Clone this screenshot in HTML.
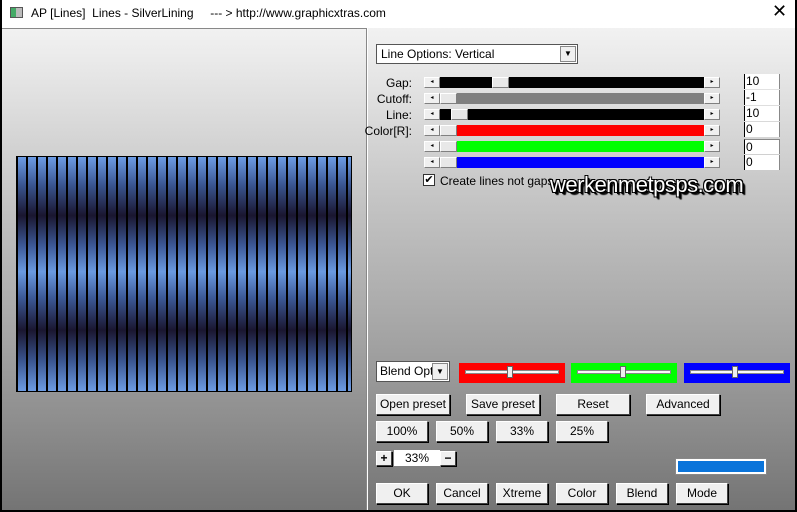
<!DOCTYPE html>
<html><head><style>
*{margin:0;padding:0;box-sizing:border-box}
html,body{width:797px;height:512px;overflow:hidden}
body{background:#000;font-family:"Liberation Sans",sans-serif;font-size:12px;position:relative}
.win{position:absolute;left:2px;top:0;width:793px;height:510px;background:linear-gradient(180deg,#f8f8f8 0px,#eaeaea 60px,#c4c4c4 200px,#a8a8a8 320px,#8e8e8e 420px,#747474 510px)}
.title{position:absolute;left:0;top:0;width:793px;height:28px;background:#fff;font-size:12px;color:#000}
.a{position:absolute}
.btn{position:absolute;height:21px;background:#f0f0f0;border:1px solid #fff;border-right-color:#404040;border-bottom-color:#404040;box-shadow:1px 1px 0 #000;text-align:center;line-height:19px;font-size:12px;color:#000}
.sb{position:absolute;left:422px;width:296px;height:11px}
.arr{position:absolute;top:0;width:16px;height:11px;background:#f0f0f0;border:1px solid #fff;border-right-color:#808080;border-bottom-color:#808080;font-size:6px;line-height:9px;text-align:center}
.thumb{position:absolute;top:0;width:17px;height:11px;background:#e8e8e8;border:1px solid #fff;border-right-color:#808080;border-bottom-color:#808080}
.lbl{position:absolute;right:383px;font-size:12px;text-align:right}
.num{position:absolute;left:742px;width:36px;height:15px;background:#fff;border-left:1px solid #000;border-right:1px solid #888;font-size:12px;line-height:14px;padding-left:1px}
</style></head><body>
<div class="win">
<div class="title">
<div class="a" style="left:8px;top:7px;width:13px;height:11px;border:1px solid #555;background:linear-gradient(90deg,#4a6 0 5px,#bbb 5px)"></div>
<div class="a" style="left:29px;top:6px;white-space:pre">AP [Lines]  Lines - SilverLining     --- &gt; http://www.graphicxtras.com</div>
<div class="a" style="left:770px;top:1px;font-size:18px">✕</div>
</div>
<div class="a" style="left:0;top:28px;width:365px;height:482px;border-top:1px solid #888;border-right:1px solid #888;box-shadow:1px 0 0 #fff"></div>
<div class="a" style="left:14px;top:156px;width:336px;height:236px;border:1px solid #000;background:repeating-linear-gradient(90deg,#000 0 1px,transparent 1px 9px,#000 9px 10px),linear-gradient(#6d9ce4 0%,#3a5590 12%,#1a1630 25%,#3d5a98 38%,#6a9ae0 49%,#3d5a98 60%,#1a1630 74%,#3a5590 87%,#6d9ce4 100%)"></div>

<div class="a" style="left:374px;top:44px;width:202px;height:20px;background:#fff;border:1px solid #555;font-size:12px;line-height:18px;padding-left:4px">Line Options: Vertical<div class="a" style="right:1px;top:1px;width:16px;height:16px;background:#f0f0f0;border:1px solid #888;font-size:8px;line-height:14px;text-align:center">▼</div></div>

<div class="lbl" style="top:76px">Gap:</div>
<div class="lbl" style="top:92px">Cutoff:</div>
<div class="lbl" style="top:108px">Line:</div>
<div class="lbl" style="top:124px">Color[R]:</div>

<div class="sb" style="top:77px;background:#000"><div class="arr" style="left:0">◂</div><div class="thumb" style="left:68px"></div><div class="arr" style="right:0">▸</div></div>
<div class="sb" style="top:93px;background:#808080"><div class="arr" style="left:0">◂</div><div class="thumb" style="left:16px"></div><div class="arr" style="right:0">▸</div></div>
<div class="sb" style="top:109px;background:#000"><div class="arr" style="left:0">◂</div><div class="thumb" style="left:27px"></div><div class="arr" style="right:0">▸</div></div>
<div class="sb" style="top:125px;background:#f00"><div class="arr" style="left:0">◂</div><div class="thumb" style="left:16px"></div><div class="arr" style="right:0">▸</div></div>
<div class="sb" style="top:141px;background:#0f0"><div class="arr" style="left:0">◂</div><div class="thumb" style="left:16px"></div><div class="arr" style="right:0">▸</div></div>
<div class="sb" style="top:157px;background:#00f"><div class="arr" style="left:0">◂</div><div class="thumb" style="left:16px"></div><div class="arr" style="right:0">▸</div></div>

<div class="num" style="top:74px">10</div>
<div class="num" style="top:90px">-1</div>
<div class="num" style="top:106px">10</div>
<div class="num" style="top:122px">0</div>
<div class="num" style="top:139px;border-top:1px solid #888">0</div>
<div class="num" style="top:155px">0</div>

<div class="a" style="left:421px;top:174px;width:12px;height:12px;background:#fff;border:1px solid #333;font-size:11px;line-height:10px;text-align:center">✔</div>
<div class="a" style="left:438px;top:174px;font-size:12px">Create lines not gaps</div>
<div class="a" style="left:548px;top:172px;font-size:22px;color:#fff;letter-spacing:-.5px;text-shadow:-1px -1px 0 #000,1px 1px 0 #000,2px 2px 0 #000,3px 3px 1px #000,-1px 1px 0 #000,1px -1px 0 #000">werkenmetpsps.com</div>

<div class="a" style="left:374px;top:361px;width:74px;height:21px;background:#fff;border:1px solid #555;line-height:19px;padding-left:3px;overflow:hidden;white-space:nowrap">Blend Opti<div class="a" style="right:1px;top:1px;width:16px;height:17px;background:#f0f0f0;border:1px solid #888;font-size:8px;line-height:15px;text-align:center">▼</div></div>
<div class="a" style="left:457px;top:363px;width:106px;height:20px;background:#f00"></div>
<div class="a" style="left:569px;top:363px;width:106px;height:20px;background:#0f0"></div>
<div class="a" style="left:682px;top:363px;width:106px;height:20px;background:#00f"></div>
<div class="a" style="left:463px;top:370px;width:94px;height:4px;background:#f8f8f8;border:1px solid #888"></div>
<div class="a" style="left:575px;top:370px;width:94px;height:4px;background:#f8f8f8;border:1px solid #888"></div>
<div class="a" style="left:688px;top:370px;width:94px;height:4px;background:#f8f8f8;border:1px solid #888"></div>
<div class="a" style="left:505px;top:366px;width:6px;height:12px;background:#eee;border:1px solid #666"></div>
<div class="a" style="left:618px;top:366px;width:6px;height:12px;background:#eee;border:1px solid #666"></div>
<div class="a" style="left:730px;top:366px;width:6px;height:12px;background:#eee;border:1px solid #666"></div>

<div class="btn" style="left:374px;top:394px;width:74px">Open preset</div>
<div class="btn" style="left:464px;top:394px;width:74px">Save preset</div>
<div class="btn" style="left:554px;top:394px;width:74px">Reset</div>
<div class="btn" style="left:644px;top:394px;width:74px">Advanced</div>

<div class="btn" style="left:374px;top:421px;width:52px">100%</div>
<div class="btn" style="left:434px;top:421px;width:52px">50%</div>
<div class="btn" style="left:494px;top:421px;width:52px">33%</div>
<div class="btn" style="left:554px;top:421px;width:52px">25%</div>

<div class="btn" style="left:374px;top:451px;width:16px;height:15px;line-height:12px;font-weight:bold">+</div>
<div class="a" style="left:392px;top:450px;width:46px;height:16px;background:#fff;text-align:center;line-height:16px">33%</div>
<div class="btn" style="left:438px;top:451px;width:16px;height:15px;line-height:12px;font-weight:bold">−</div>
<div class="a" style="left:674px;top:459px;width:90px;height:15px;background:#0a74da;border:2px solid #fff;outline:1px solid #888"></div>

<div class="btn" style="left:374px;top:483px;width:52px">OK</div>
<div class="btn" style="left:434px;top:483px;width:52px">Cancel</div>
<div class="btn" style="left:494px;top:483px;width:52px">Xtreme</div>
<div class="btn" style="left:554px;top:483px;width:52px">Color</div>
<div class="btn" style="left:614px;top:483px;width:52px">Blend</div>
<div class="btn" style="left:674px;top:483px;width:52px">Mode</div>
</div>
</body></html>
